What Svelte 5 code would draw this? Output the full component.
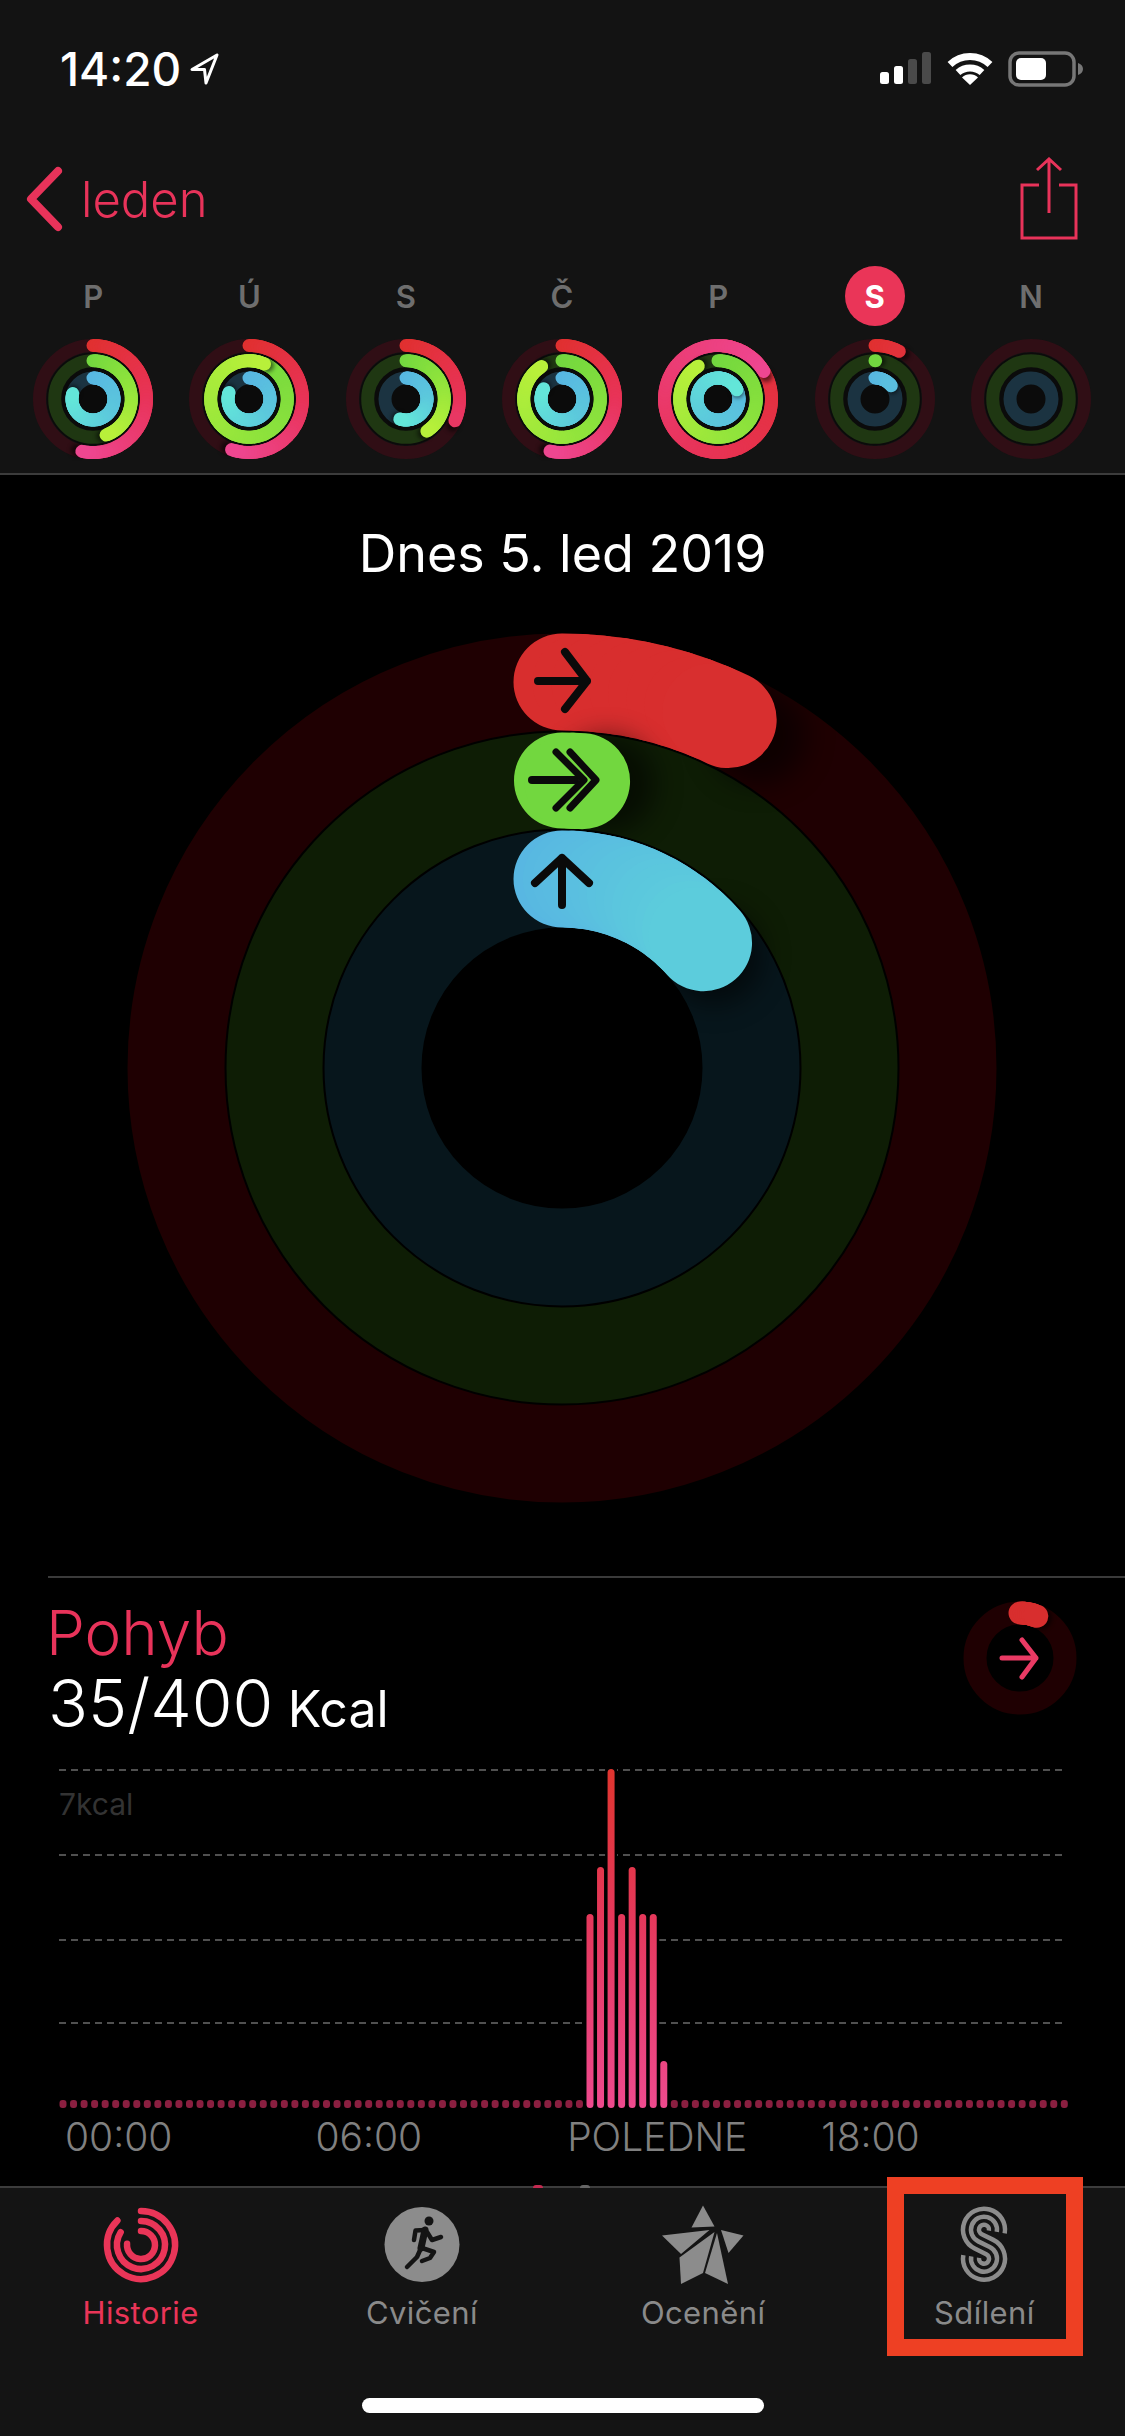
<script>
  const RED = [[224, 48, 46], [232, 51, 88], [238, 70, 144]];
  const GREEN = [[114, 215, 63], [145, 228, 60], [184, 240, 58]];
  const BLUE = [[88, 182, 226], [92, 200, 220], [99, 230, 217]];

  const days = [
    { label: 'P', rings: [192, 160, 285] },
    { label: 'Ú', rings: [199, 384, 288] },
    { label: 'S', rings: [114, 147, 197] },
    { label: 'Č', rings: [193, 328, 299] },
    { label: 'P', rings: [419, 329, 424] },
    { label: 'S', rings: [27, 1, 51], today: true },
    { label: 'N', rings: [0, 0, 0] },
  ];

  const smallTracks = ['#300e15', '#1f3712', '#1b3341'];
  const bigTracks = ['#1f0002', '#0e1d05', '#07161c'];
  const bigRings = [
    { r: 386, w: 97 },
    { r: 287.5, w: 96 },
    { r: 189, w: 97 },
  ];

  function point(cx, cy, r, deg) {
    const rad = (deg * Math.PI) / 180;
    return [cx + r * Math.sin(rad), cy - r * Math.cos(rad)];
  }

  function mix(stops, t) {
    const pos = Math.min(1, Math.max(0, t)) * (stops.length - 1);
    const i = Math.min(stops.length - 2, Math.floor(pos));
    const f = pos - i;
    const c = stops[i].map((v, k) => Math.round(v + (stops[i + 1][k] - v) * f));
    return `rgb(${c[0]},${c[1]},${c[2]})`;
  }

  // an activity arc, cut in short pieces so the colour can run along it
  function arc(cx, cy, r, deg, stops, span) {
    if (deg <= 0) return { pieces: [], last: [], tip: null };
    const full = Math.max(span, deg);
    const count = Math.max(1, Math.ceil(deg / 3));
    const all = [];
    for (let i = 0; i < count; i++) {
      const a = (deg * i) / count;
      const b = (deg * (i + 1)) / count;
      const p = point(cx, cy, r, a);
      const q = point(cx, cy, r, b);
      all.push({
        d: `M${p[0].toFixed(2)} ${p[1].toFixed(2)}A${r} ${r} 0 0 1 ${q[0].toFixed(2)} ${q[1].toFixed(2)}`,
        color: mix(stops, b / full),
      });
    }
    const keep = Math.max(1, Math.ceil(12 / 3));
    return {
      pieces: all.slice(0, -keep),
      last: all.slice(-keep),
      tip: point(cx, cy, r, deg + 5),
    };
  }

  const spans = [190, 150, 200];
  const palettes = [RED, GREEN, BLUE];

  function bars() {
    const out = [];
    const tall = { 50: 1914, 51: 1867, 52: 1769, 53: 1914, 54: 1867, 55: 1914, 56: 1914, 57: 2061 };
    for (let i = 0; i < 96; i++) {
      const x = 63 + i * 10.54;
      out.push({ x, top: tall[i] ?? 2100, active: i in tall });
    }
    return out;
  }
  const chartBars = bars();
  const gridLines = [1770, 1855, 1940, 2023];

  // one strand of the sharing icon: radius rt on the upper loop, rb on the lower one
  function strand(rt, rb) {
    const top = [50, 34.7];
    const bottom = [50, 63.7];
    const dist = bottom[1] - top[1];
    const a = 360 - (Math.acos(-(rt + rb) / dist) * 180) / Math.PI;
    const s = point(top[0], top[1], rt, 100);
    const p = point(top[0], top[1], rt, a);
    const q = point(bottom[0], bottom[1], rb, a - 180);
    const e = point(bottom[0], bottom[1], rb, 280);
    const f = (n) => n.toFixed(2);
    return `M${f(s[0])} ${f(s[1])}A${rt} ${rt} 0 1 0 ${f(p[0])} ${f(p[1])}L${f(q[0])} ${f(q[1])}A${rb} ${rb} 0 1 1 ${f(e[0])} ${f(e[1])}`;
  }
  const strands = [strand(21, 5), strand(13, 13), strand(5, 21)];

  const historyArcs = [
    { r: 34, end: 316 },
    { r: 24, end: 302 },
    { r: 14, end: 275 },
  ].map(({ r, end }) => {
    const q = point(50, 50, r, end);
    return `M50 ${50 - r}A${r} ${r} 0 1 1 ${q[0].toFixed(2)} ${q[1].toFixed(2)}`;
  });
</script>

{#snippet ringArc(shape, width, shadow)}
  {#each shape.pieces as s}
    <path d={s.d} stroke={s.color} stroke-width={width} stroke-linecap="round" fill="none" />
  {/each}
  {#if shape.tip}
    <circle cx={shape.tip[0]} cy={shape.tip[1]} r={width / 2} fill="#000" opacity="0.55" style="filter: blur({shadow}px)" />
  {/if}
  {#each shape.last as s}
    <path d={s.d} stroke={s.color} stroke-width={width} stroke-linecap="round" fill="none" />
  {/each}
{/snippet}

{#snippet smallRings(values)}
  <svg class="day-rings" width="124" height="124" viewBox="0 0 124 124">
    <circle cx="62" cy="62" r="46.5" fill="#0b0b0b" />
    {#each [53.5, 38.3, 21] as r, i}
      <circle cx="62" cy="62" {r} fill="none" stroke={smallTracks[i]} stroke-width="13" />
    {/each}
    {#each [53.5, 38.3, 21] as r, i}
      {@render ringArc(arc(62, 62, r, values[i], palettes[i], spans[i]), 13, 2)}
    {/each}
  </svg>
{/snippet}

<div class="app">
  <header class="top">
    <div class="status">
      <div class="clock">
        <span>14:20</span>
        <svg width="30" height="34" viewBox="0 0 30 34">
          <path d="M28 3 3 17.5h12.5L17 31z" fill="none" stroke="#fff" stroke-width="3" stroke-linejoin="round" />
        </svg>
      </div>
      <div class="status-icons">
        <svg width="52" height="34" viewBox="0 0 52 34">
          <rect x="0" y="20" width="9" height="12" rx="2.5" fill="#fff" />
          <rect x="14" y="14" width="9" height="18" rx="2.5" fill="#fff" />
          <rect x="28" y="7" width="9" height="25" rx="2.5" fill="#4a4a4a" />
          <rect x="42" y="0" width="9" height="32" rx="2.5" fill="#4a4a4a" />
        </svg>
        <svg width="48" height="34" viewBox="0 0 48 34">
          <path d="M4 12.5a29 29 0 0 1 40 0" fill="none" stroke="#fff" stroke-width="7" stroke-linecap="butt" />
          <path d="M12 20.5a18 18 0 0 1 24 0" fill="none" stroke="#fff" stroke-width="7" stroke-linecap="butt" />
          <path d="M24 33 16 25.5a11.5 11.5 0 0 1 16 0z" fill="#fff" />
        </svg>
        <svg width="76" height="36" viewBox="0 0 76 36">
          <rect x="2" y="2" width="64" height="32" rx="9" fill="none" stroke="#777" stroke-width="3.5" />
          <rect x="8" y="7" width="30" height="22" rx="5" fill="#fff" />
          <path d="M70 12c3 1 5 3 5 6s-2 5-5 6z" fill="#777" />
        </svg>
      </div>
    </div>

    <nav class="nav">
      <div class="back">
        <svg width="40" height="66" viewBox="0 0 40 66">
          <path d="M33 5 6 33l27 28" fill="none" stroke="#e8335a" stroke-width="8" stroke-linecap="round" stroke-linejoin="round" />
        </svg>
        <span>leden</span>
      </div>
      <svg class="share" width="60" height="84" viewBox="0 0 60 84">
        <path d="M20 28H3v53h54V28H40M30 56V2M18 13 30 2l12 11" fill="none" stroke="#e8335a" stroke-width="3" />
      </svg>
    </nav>

    <div class="week">
      {#each days as day}
        <div class="day">
          <span class="day-label" class:today={day.today}>{day.label}</span>
          {@render smallRings(day.rings)}
        </div>
      {/each}
    </div>
  </header>

  <main class="content">
    <h1 class="date">Dnes 5. led 2019</h1>

    <svg class="hero" width="1125" height="880" viewBox="0 628 1125 880">
      {#each bigRings as ring, i}
        <circle cx="562" cy="1068" r={ring.r} fill="none" stroke={bigTracks[i]} stroke-width={ring.w} />
      {/each}
      {@render ringArc(arc(562, 1068, 386, 25.5, [[216, 46, 46], [216, 50, 50]], 190), 97, 14)}
      {@render ringArc(arc(562, 1068, 287.5, 4, [[114, 215, 63], [114, 215, 63]], 150), 96, 14)}
      {@render ringArc(arc(562, 1068, 189, 48.5, [[88, 182, 226], [92, 204, 220]], 48), 97, 14)}
      <g fill="none" stroke="#0a0a0a" stroke-linecap="round" stroke-linejoin="round">
        <path d="M538 681h49M565 652l22 29-22 28" stroke-width="8" />
        <path d="M532 780h43" stroke-width="8" />
        <path d="M556 752l28 28-28 28M570 752l26 28-26 28" stroke-width="7" />
        <path d="M562 905v-47M535 883l27-25 27 25" stroke-width="8" />
      </g>
    </svg>

    <section class="goal">
      <div class="goal-text">
        <div class="goal-name">Pohyb</div>
        <div class="goal-value">35/400 <small>Kcal</small></div>
      </div>
      <svg class="goal-ring" width="120" height="120" viewBox="0 0 120 120">
        <circle cx="60" cy="60" r="45" fill="none" stroke="#1f0002" stroke-width="23" />
        {@render ringArc(arc(60, 60, 45, 22, [[216, 46, 46], [216, 50, 50]], 190), 23, 2)}
        <path d="M42 60h34M62 42l14 18-14 19" fill="none" stroke="#ea3a64" stroke-width="5" stroke-linecap="round" stroke-linejoin="round" />
      </svg>
    </section>

    <svg class="chart" width="1125" height="352" viewBox="0 1760 1125 352">
      <defs>
        <linearGradient id="bar-fill" gradientUnits="userSpaceOnUse" x1="0" y1="1769" x2="0" y2="2108">
          <stop offset="0" stop-color="#e0352f" />
          <stop offset="0.45" stop-color="#e5385c" />
          <stop offset="1" stop-color="#ee4a8e" />
        </linearGradient>
      </defs>
      {#each gridLines as y}
        <line x1="59" x2="1062" y1={y} y2={y} stroke="#505050" stroke-width="2" stroke-dasharray="7 5" />
      {/each}
      <text x="59" y="1815" class="chart-unit">7kcal</text>
      {#each chartBars as bar}
        {#if bar.active}
          <rect x={bar.x - 6} y={bar.top - 3} width="12" height={2108 - bar.top + 3} fill="#000" />
        {/if}
      {/each}
      {#each chartBars as bar}
        {#if bar.active}
          <rect x={bar.x - 3.5} y={bar.top} width="7" height={2108 - bar.top} rx="3.5" fill="url(#bar-fill)" />
        {:else}
          <rect x={bar.x - 3.5} y={bar.top} width="7" height="8" rx="3" fill="#8a1f40" />
        {/if}
      {/each}
    </svg>

    <div class="axis">
      <span>00:00</span>
      <span>06:00</span>
      <span>POLEDNE</span>
      <span>18:00</span>
    </div>
  </main>

  <footer class="tabs">
    <i class="peek pink"></i>
    <i class="peek grey"></i>
    <div class="tab active">
      <svg width="100" height="100" viewBox="0 0 100 100">
        {#each historyArcs as d}
          <path {d} fill="none" stroke="#ea3558" stroke-width="6.5" stroke-linecap="round" />
        {/each}
      </svg>
      <span>Historie</span>
    </div>
    <div class="tab">
      <svg width="100" height="100" viewBox="0 0 100 100">
        <circle cx="50" cy="49.5" r="37.5" fill="#8c8c8c" />
        <circle cx="57" cy="26" r="4.5" fill="#141414" />
        <g fill="none" stroke="#141414" stroke-width="4.5" stroke-linecap="round" stroke-linejoin="round">
          <path d="M42 45l1.500-9.500L53 35" />
          <path d="M53 35 49 53" stroke-width="7" />
          <path d="M55 37l5 8 9-3" />
          <path d="M50 53l12 4-4 6-8 3" />
          <path d="M49 53l-4 9-10 10" />
        </g>
      </svg>
      <span>Cvičení</span>
    </div>
    <div class="tab">
      <svg width="100" height="100" viewBox="0 0 100 100" fill="#8c8c8c">
        <path d="M50 10.500 61.500 31.500 38.500 32.500z" />
        <path d="M9 40.500 56.500 35 28 59z" />
        <path d="M61.500 37 50 78 28 89 26.500 62.500z" />
        <path d="M64 38 75 89 52 78z" />
        <path d="M68 35 90.500 40.500 75.500 58z" />
      </svg>
      <span>Ocenění</span>
    </div>
    <div class="tab">
      <svg width="100" height="100" viewBox="0 0 100 100">
        {#each strands as d}
          <path {d} fill="none" stroke="#8c8c8c" stroke-width="4.5" />
        {/each}
      </svg>
      <span>Sdílení</span>
    </div>
    <div class="home-bar"></div>
  </footer>

  <div class="callout"></div>
</div>

<style>
  :global(body) {
    margin: 0;
    background: #000;
  }

  .app {
    position: relative;
    display: flex;
    flex-direction: column;
    width: 1125px;
    height: 2436px;
    overflow: hidden;
    background: #000;
    color: #fff;
    font-family: Inter, "Liberation Sans", sans-serif;
  }

  .top {
    background: #131313;
    border-bottom: 2px solid #3c3c3c;
    height: 475px;
    box-sizing: border-box;
  }

  .status {
    display: flex;
    align-items: center;
    justify-content: space-between;
    height: 138px;
    padding: 0 41px 0 60px;
  }

  .clock {
    display: flex;
    align-items: center;
    gap: 8px;
    font-size: 46px;
    font-weight: 500;
  }

  .clock svg,
  .status-icons svg {
    display: block;
  }

  .status-icons {
    display: flex;
    align-items: center;
    gap: 14px;
  }

  .nav {
    display: flex;
    align-items: center;
    justify-content: space-between;
    height: 122px;
    padding: 0 46px 0 25px;
  }

  .back {
    display: flex;
    align-items: center;
    gap: 16px;
    color: #e8335a;
    font-size: 49px;
    font-weight: 300;
  }

  .week {
    display: grid;
    grid-template-columns: repeat(7, 156.3px);
    padding-left: 15px;
  }

  .day {
    display: flex;
    flex-direction: column;
    align-items: center;
  }

  .day-label {
    display: flex;
    align-items: center;
    justify-content: center;
    width: 60px;
    height: 60px;
    margin: 6px 0 11px;
    border-radius: 50%;
    color: #6e6e6e;
    font-size: 31px;
    font-weight: 600;
  }

  .day-label.today {
    background: #ea3558;
    color: #fff;
    font-weight: 700;
  }

  .day-rings {
    display: block;
  }

  .content {
    flex: 1;
    min-height: 0;
  }

  .date {
    margin: 0;
    padding-top: 49px;
    height: 153px;
    box-sizing: border-box;
    font-size: 52px;
    font-weight: 400;
    line-height: 60px;
    text-align: center;
  }

  .hero {
    display: block;
  }

  .goal {
    position: relative;
    display: flex;
    justify-content: space-between;
    margin: 68px 0 0 48px;
    padding: 20px 45px 0 0;
    height: 184px;
    box-sizing: border-box;
    border-top: 2px solid #3a3a3a;
  }

  .goal-name {
    margin-left: -2px;
    color: #e8335a;
    font-size: 62px;
    font-weight: 300;
    line-height: 70px;
  }

  .goal-value {
    font-size: 66px;
    font-weight: 300;
    line-height: 70px;
    word-spacing: -4px;
  }

  .goal-value small {
    font-size: 50px;
    font-weight: 400;
  }

  .chart {
    display: block;
  }

  .chart-unit {
    fill: #333;
    font-size: 30px;
  }

  .axis {
    display: flex;
    padding: 3px 0 0 65px;
    color: #808080;
    font-size: 39px;
    font-weight: 300;
    line-height: 44px;
  }

  .axis span:nth-child(2) {
    margin-left: 143px;
  }

  .axis span:nth-child(3) {
    margin-left: 145px;
  }

  .axis span:nth-child(4) {
    margin-left: 74px;
  }

  .tabs {
    position: relative;
    display: grid;
    grid-template-columns: repeat(4, 1fr);
    align-content: start;
    height: 250px;
    padding-top: 7px;
    box-sizing: border-box;
    background: #141414;
    border-top: 2px solid #3c3c3c;
  }

  .tab {
    display: flex;
    flex-direction: column;
    align-items: center;
    color: #8a8a8a;
    font-size: 31px;
    letter-spacing: 0.4px;
    line-height: 36px;
  }

  .tab svg {
    display: block;
  }

  .tab.active {
    color: #ea3558;
  }

  .home-bar {
    position: absolute;
    left: 362px;
    top: 210px;
    width: 402px;
    height: 15px;
    border-radius: 8px;
    background: #fff;
  }

  .peek {
    position: absolute;
    top: -3px;
    width: 10px;
    height: 3px;
    border-radius: 3px 3px 0 0;
  }

  .peek.pink {
    left: 533px;
    background: #c22a50;
  }

  .peek.grey {
    left: 580px;
    background: #666;
  }

  .callout {
    position: absolute;
    left: 887px;
    top: 2177px;
    width: 196px;
    height: 179px;
    box-sizing: border-box;
    border: 17px solid #ee4023;
  }
</style>
